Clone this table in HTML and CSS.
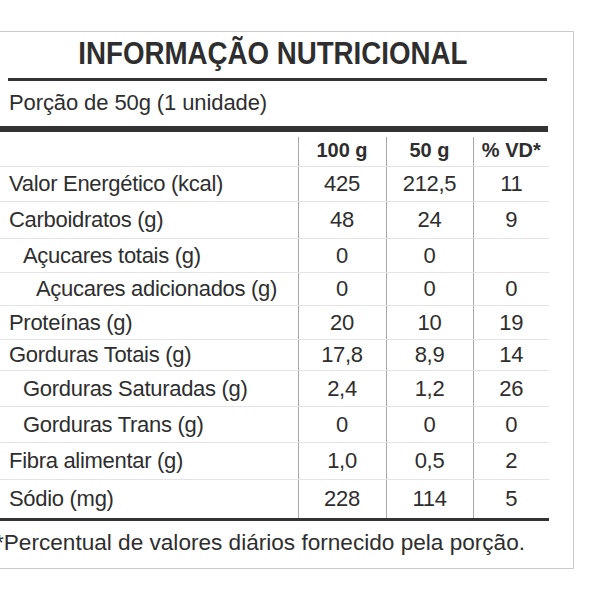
FILE: index.html
```html
<!DOCTYPE html>
<html lang="pt-BR">
<head>
<meta charset="utf-8">
<title>Informação Nutricional</title>
<link rel="stylesheet" href="styles.css">
</head>
<body>
<section class="panel">
  <h1 class="title"><span class="title-text">INFORMAÇÃO NUTRICIONAL</span></h1>
  <p class="serving">Porção de 50g (1 unidade)</p>
  <div class="gap"></div>
  <table class="facts">
    <colgroup>
      <col class="c-label"><col class="c-100"><col class="c-50"><col class="c-vd">
    </colgroup>
    <thead>
      <tr>
        <th></th><th class="num">100 g</th><th class="num">50 g</th><th class="num">% VD*</th>
      </tr>
    </thead>
    <tbody>
      <tr><td>Valor Energético (kcal)</td><td class="num">425</td><td class="num">212,5</td><td class="num">11</td></tr>
      <tr class="r37"><td>Carboidratos (g)</td><td class="num">48</td><td class="num">24</td><td class="num">9</td></tr>
      <tr class="r34"><td class="ind1">Açucares totais (g)</td><td class="num">0</td><td class="num">0</td><td class="num"></td></tr>
      <tr class="r33"><td class="ind2">Açucares adicionados (g)</td><td class="num">0</td><td class="num">0</td><td class="num">0</td></tr>
      <tr class="r34"><td>Proteínas (g)</td><td class="num">20</td><td class="num">10</td><td class="num">19</td></tr>
      <tr class="r31"><td>Gorduras Totais (g)</td><td class="num">17,8</td><td class="num">8,9</td><td class="num">14</td></tr>
      <tr class="r36"><td class="ind1">Gorduras Saturadas (g)</td><td class="num">2,4</td><td class="num">1,2</td><td class="num">26</td></tr>
      <tr class="r36"><td class="ind1">Gorduras Trans (g)</td><td class="num">0</td><td class="num">0</td><td class="num">0</td></tr>
      <tr class="r37"><td>Fibra alimentar (g)</td><td class="num">1,0</td><td class="num">0,5</td><td class="num">2</td></tr>
      <tr class="last"><td>Sódio (mg)</td><td class="num">228</td><td class="num">114</td><td class="num">5</td></tr>
    </tbody>
  </table>
  <p class="note">*Percentual de valores diários fornecido pela porção.</p>
</section>
</body>
</html>
```
FILE: styles.css
```css
html, body {
  margin: 0;
  padding: 0;
  background: #ffffff;
  overflow: hidden;
}

body {
  font-family: "Liberation Sans", Arial, sans-serif;
  color: #2e2e2e;
}

.panel {
  box-sizing: border-box;
  width: 585px;
  margin: 31px 0 0 -11px;
  padding: 0 24px 0 10px;
  border: 1px solid #cacaca;
}

.title {
  margin: 0 2px 0 8px;
  padding: 3px 10px 5.5px 0;
  border-bottom: 3px solid #333333;
  font-size: 32px;
  line-height: 37px;
  font-weight: bold;
  text-align: center;
  white-space: nowrap;
}

.title-text {
  display: inline-block;
  transform: scaleX(0.865);
}

.serving {
  margin: 0 1px 0 0;
  padding: 9px 0 10.5px 9px;
  border-bottom: 6px solid #333333;
  font-size: 22px;
  line-height: 26px;
  letter-spacing: -0.1px;
}

.gap {
  height: 5px;
}

.facts {
  width: 549px;
  border-collapse: collapse;
  table-layout: fixed;
  font-size: 22px;
  line-height: 26px;
  letter-spacing: -0.3px;
}

.c-label { width: 298px; }
.c-100 { width: 88px; }
.c-50 { width: 87px; }
.c-vd { width: 76px; }

.facts th,
.facts td {
  padding: 0;
  border-bottom: 1px solid #e4e4e4;
  vertical-align: middle;
  white-space: nowrap;
}

.facts th {
  height: 26px;
  font-size: 20px;
  font-weight: bold;
  letter-spacing: 0;
  padding-bottom: 3px;
}

.facts td {
  height: 34px;
  text-align: left;
  padding-left: 9px;
}

.facts tr.r31 td { height: 30px; }
.facts tr.r33 td { height: 32px; }
.facts tr.r34 td { height: 33px; }
.facts tr.r36 td { height: 35px; }
.facts tr.r37 td { height: 36px; }

.facts .num {
  text-align: center;
  padding-left: 0;
  border-left: 1px solid #a8a8a8;
}

.facts td.ind1 { padding-left: 23px; }
.facts td.ind2 { padding-left: 36px; }

.facts tr.last td {
  height: 37.5px;
  border-bottom: 3px solid #333333;
}

.note {
  margin: 9px 0 0 -5px;
  padding: 0 0 12px 0;
  font-size: 22.6px;
  line-height: 26px;
  white-space: nowrap;
}
```
